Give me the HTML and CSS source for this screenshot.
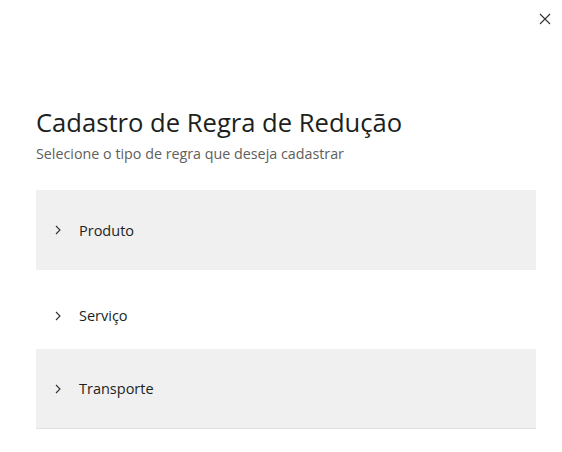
FILE: index.html
```html
<!DOCTYPE html>
<html lang="pt-BR">
<head>
    <meta charset="UTF-8">
    <meta name="viewport" content="width=device-width, initial-scale=1.0">
    <title>Cadastro de Regra de Redução</title>
    <link rel="stylesheet" href="styles.css">
</head>
<body>
    <div class="dialog">
        <div class="top-bar">
            <button class="close" title="Fechar">
                <svg width="12" height="12" viewBox="0 0 12 12">
                    <path d="M1 1 L11 11 M11 1 L1 11" stroke="#323130" stroke-width="1.1" fill="none"/>
                </svg>
            </button>
        </div>
        <div class="content">
            <h1>Cadastro de Regra de Redução</h1>
            <p class="subtitle">Selecione o tipo de regra que deseja cadastrar</p>
            <div class="rule-list">
                <div class="rule-item shaded">
                    <span class="chevron">
                        <svg width="8" height="10" viewBox="0 0 8 10"><path d="M2 1 L6 5 L2 9" stroke="#323130" stroke-width="1.1" fill="none"/></svg>
                    </span>
                    <span class="label">Produto</span>
                </div>
                <div class="rule-item plain">
                    <span class="chevron">
                        <svg width="8" height="10" viewBox="0 0 8 10"><path d="M2 1 L6 5 L2 9" stroke="#323130" stroke-width="1.1" fill="none"/></svg>
                    </span>
                    <span class="label">Serviço</span>
                </div>
                <div class="rule-item shaded last">
                    <span class="chevron">
                        <svg width="8" height="10" viewBox="0 0 8 10"><path d="M2 1 L6 5 L2 9" stroke="#323130" stroke-width="1.1" fill="none"/></svg>
                    </span>
                    <span class="label">Transporte</span>
                </div>
            </div>
        </div>
    </div>
</body>
</html>
```

FILE: styles.css
```css
body {
    margin: 0;
    padding: 0;
    background-color: white;
    font-family: "Open Sans", "Noto Sans", sans-serif;
    color: #323130;
}
.dialog {
    width: 562px;
    height: 452px;
    overflow: hidden;
}
.top-bar {
    display: flex;
    justify-content: flex-end;
    height: 105px;
}
.close {
    width: 32px;
    height: 32px;
    margin: 3px 1px 0 0;
    padding: 0;
    border: none;
    background: none;
    display: flex;
    align-items: center;
    justify-content: center;
    cursor: pointer;
}
.content {
    padding: 0 26px 0 36px;
}
h1 {
    margin: 0;
    font-size: 25.6px;
    font-weight: 400;
    line-height: 36px;
    color: #201f1e;
}
.subtitle {
    margin: 3px 0 0;
    font-size: 14.3px;
    line-height: 20px;
    color: #605e5c;
}
.rule-list {
    margin-top: 26px;
}
.rule-item {
    display: flex;
    align-items: center;
    height: 80px;
    padding-left: 18px;
    box-sizing: border-box;
    cursor: pointer;
}
.rule-item.shaded {
    background-color: #f0f0f0;
}
.rule-item.plain {
    height: 79px;
    padding-top: 12px;
}
.rule-item.last {
    border-bottom: 1px solid #e1e1e1;
}
.chevron {
    display: flex;
    width: 8px;
    margin-right: 17px;
}
.label {
    font-size: 14.5px;
    color: #201f1e;
}
```
